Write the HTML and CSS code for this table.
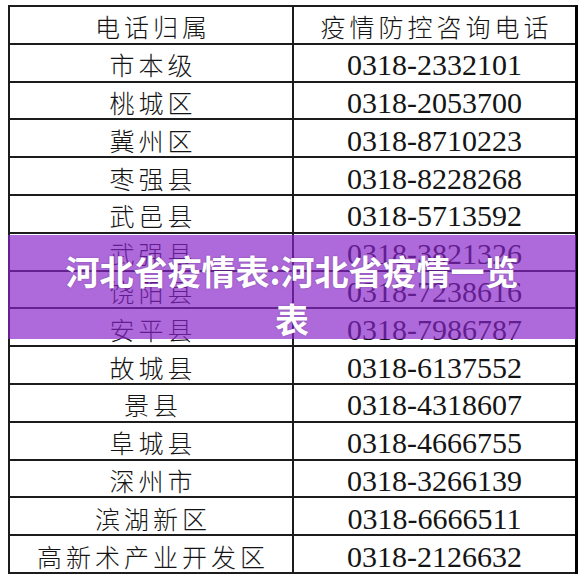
FILE: index.html
```html
<!DOCTYPE html>
<html lang="zh-CN">
<head>
<meta charset="utf-8">
<title>河北省疫情表</title>
<link rel="stylesheet" href="styles.css">
</head>
<body>
<div class="sheet">
  <table class="phones">
    <tr><td class="area head">电话归属</td><td class="area head">疫情防控咨询电话</td></tr>
    <tr><td class="area">市本级</td><td class="num">0318-2332101</td></tr>
    <tr><td class="area">桃城区</td><td class="num">0318-2053700</td></tr>
    <tr><td class="area">冀州区</td><td class="num">0318-8710223</td></tr>
    <tr><td class="area">枣强县</td><td class="num">0318-8228268</td></tr>
    <tr><td class="area">武邑县</td><td class="num">0318-5713592</td></tr>
    <tr><td class="area">武强县</td><td class="num">0318-3821326</td></tr>
    <tr><td class="area">饶阳县</td><td class="num">0318-7238616</td></tr>
    <tr><td class="area">安平县</td><td class="num">0318-7986787</td></tr>
    <tr><td class="area">故城县</td><td class="num">0318-6137552</td></tr>
    <tr><td class="area">景县</td><td class="num">0318-4318607</td></tr>
    <tr><td class="area">阜城县</td><td class="num">0318-4666755</td></tr>
    <tr><td class="area">深州市</td><td class="num">0318-3266139</td></tr>
    <tr><td class="area">滨湖新区</td><td class="num">0318-6666511</td></tr>
    <tr><td class="area">高新术产业开发区</td><td class="num">0318-2126632</td></tr>
  </table>
  <div class="banner">河北省疫情表:河北省疫情一览表</div>
</div>
</body>
</html>
```

FILE: styles.css
```css
html, body {
  margin: 0;
  padding: 0;
  background: #ffffff;
}
.sheet {
  position: relative;
  width: 580px;
  height: 574px;
  padding: 5px 0 0 8px;
  box-sizing: border-box;
  overflow: hidden;
}
.phones {
  border-collapse: collapse;
  width: 570px;
  border-top: 2px solid #000;
  border-left: 2px solid #000;
  border-bottom: 2px solid #000;
  border-right: 3px solid #000;
}
.phones td {
  border: 2px solid #1c1c1c;
  height: 37.8px;
  padding: 4px 0 0 0;
  box-sizing: border-box;
  text-align: center;
  vertical-align: middle;
  color: #141414;
  line-height: 29px;
}
.phones td:first-child {
  width: 284px;
}
.area {
  font-family: "Noto Sans CJK SC", "Noto Sans", sans-serif;
  font-weight: 300;
  font-size: 25px;
  letter-spacing: 4px;
  text-indent: 4px;
}
.num {
  font-family: "Liberation Serif", "DejaVu Serif", serif;
  font-size: 30px;
  letter-spacing: 0;
}
.banner {
  position: absolute;
  left: 8px;
  top: 235px;
  width: 568px;
  height: 104px;
  box-sizing: border-box;
  padding: 12px 48px 0;
  background: rgba(135, 35, 200, 0.68);
  color: #ffffff;
  font-family: "Noto Sans CJK SC", "Noto Sans", sans-serif;
  font-weight: 700;
  font-size: 34px;
  line-height: 48px;
  text-align: center;
  text-shadow: 0 0 2px rgba(40, 0, 60, 0.35);
}
```
